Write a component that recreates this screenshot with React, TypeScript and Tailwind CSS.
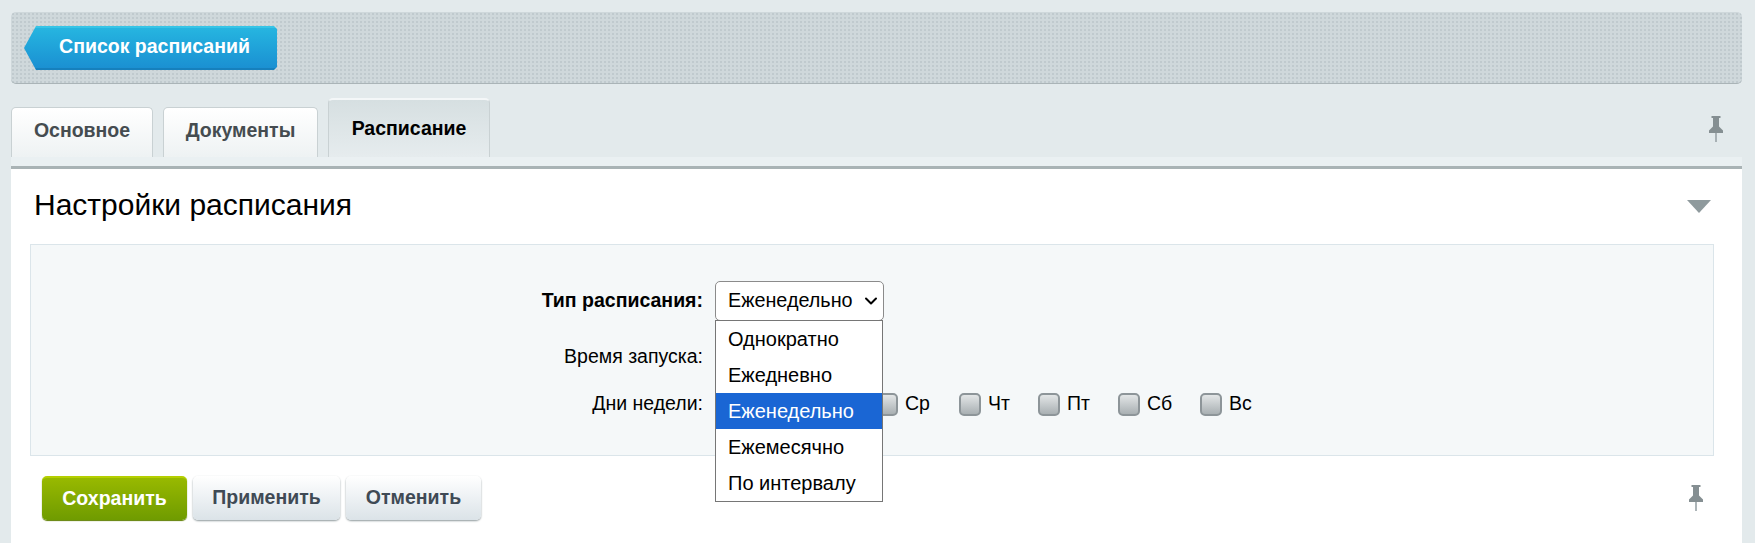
import { ChevronDown } from "lucide-react";

const font = "font-['Liberation_Sans',Arial,sans-serif]";

const options = ["Однократно", "Ежедневно", "Еженедельно", "Ежемесячно", "По интервалу"];

const days = [
  { name: "Ср", w: "w-[83px]" },
  { name: "Чт", w: "w-[79px]" },
  { name: "Пт", w: "w-[80px]" },
  { name: "Сб", w: "w-[82px]" },
  { name: "Вс", w: "w-[60px]" },
];

function Pin() {
  return (
    <svg width="14" height="26" viewBox="0 0 14 26" className="block">
      <path d="M2.5 0h9v2H10v8.5l4 4V17H0v-2.5l4-4V2H2.5z" fill="#858f92" />
      <rect x="6.2" y="17" width="1.6" height="9" fill="#9aa4a7" />
    </svg>
  );
}

function Tab({ label, className }: { label: string; className: string }) {
  return (
    <div
      className={`h-[50px] mr-[10px] pb-[4px] rounded-t-[5px] border border-b-0 border-[#c9d1d3] bg-gradient-to-b from-white to-[#eef2f3] flex items-center justify-center text-[19.5px] font-bold text-[#454c50] ${className}`}
    >
      {label}
    </div>
  );
}

function Day({ name, w }: { name: string; w: string }) {
  return (
    <div className={`flex items-center gap-[7px] ${w}`}>
      <div className="w-[22px] h-[23px] shrink-0 rounded-[5px] border-2 border-[#8d9599] bg-gradient-to-b from-[#e3e6e7] to-[#a9b0b3]" />
      <span className="text-[19.5px] text-black">{name}</span>
    </div>
  );
}

function ActionButton({ label, className }: { label: string; className: string }) {
  return (
    <button
      className={`h-[44px] pb-[1px] rounded-[5px] text-[19.5px] font-bold flex items-center justify-center ${className}`}
    >
      {label}
    </button>
  );
}

export default function App() {
  return (
    <div className={`${font} h-[543px] overflow-hidden bg-[#e3eaec] pt-[12px] pl-[11px] pr-[13px]`}>
      <div className="h-[72px] rounded-[5px] border-b border-[#aab4b7] bg-[#cfd8db] bg-[radial-gradient(#c0cace_1px,transparent_1px)] bg-[length:4px_4px] pt-[14px] pl-[13px]">
        <div className="w-[253px] h-[44px] pl-[8px] pb-[3px] flex items-center justify-center border-t-2 border-b-2 border-t-[#36c4e6] border-b-[#1680bd] bg-gradient-to-b from-[#26b5e0] to-[#1b90d2] text-[19.5px] font-bold text-white [clip-path:polygon(12px_0,calc(100%-3px)_0,100%_3px,100%_calc(100%-3px),calc(100%-3px)_100%,12px_100%,0_50%)]">
          Список расписаний
        </div>
      </div>

      <div className="h-[73px] flex items-end">
        <Tab label="Основное" className="w-[142px]" />
        <Tab label="Документы" className="w-[155px]" />
        <div className="w-[162px] h-[59px] rounded-t-[5px] border border-b-0 border-t-2 border-[#c9d1d3] border-t-[#f4f7f8] bg-gradient-to-b from-[#d6dfe1] to-[#e6ecee] flex items-center justify-center text-[19.5px] font-bold text-black">
          Расписание
        </div>
        <div className="ml-auto mb-[15px] mr-[19px]">
          <Pin />
        </div>
      </div>

      <div className="h-[12px] bg-[#eaf0f2] border-b-[3px] border-[#a9b3b5]" />

      <div className="h-[374px] bg-white pl-[19px] pr-[28px]">
        <div className="h-[75px] flex items-center justify-between pl-[4px] pr-[3px]">
          <h1 className="text-[30px] font-normal text-black mb-[5px]">Настройки расписания</h1>
          <div className="w-0 h-0 mb-[1px] border-l-[12px] border-r-[12px] border-t-[13px] border-l-transparent border-r-transparent border-t-[#8f9a9d]" />
        </div>

        <div className="h-[212px] border border-[#dbe5ea] bg-[#f5f8f9] pt-[36px] text-[19.5px] text-black">
          <div className="h-[40px] flex items-center">
            <div className="w-[672px] text-right font-bold">Тип расписания:</div>
            <div className="relative ml-[12px]">
              <div className="w-[169px] h-[40px] rounded-[5px] border border-[#8b8b8b] bg-white pl-[12px] pr-[2px] flex items-center justify-between text-[19.8px]">
                <span>Еженедельно</span>
                <ChevronDown size={20} strokeWidth={2.4} />
              </div>
              <ul className="absolute z-10 left-0 top-[39px] w-[168px] border border-[#767676] bg-white text-[20px]">
                {options.map((o) => (
                  <li
                    key={o}
                    className={`h-[36px] pl-[12px] flex items-center ${o === "Еженедельно" ? "bg-[#1a66d4] text-white" : ""}`}
                  >
                    {o}
                  </li>
                ))}
              </ul>
            </div>
          </div>
          <div className="h-[71px] flex items-center">
            <div className="w-[672px] text-right">Время запуска:</div>
          </div>
          <div className="h-[24px] flex items-center">
            <div className="w-[672px] text-right">Дни недели:</div>
            <div className="ml-[173px] flex items-center">
              {days.map((d) => (
                <Day key={d.name} name={d.name} w={d.w} />
              ))}
            </div>
          </div>
        </div>

        <div className="mt-[20px] pl-[12px] pr-[11px] flex items-center">
          <ActionButton
            label="Сохранить"
            className="w-[145px] border-t-2 border-[#b4cf00] bg-gradient-to-b from-[#98b900] to-[#6f9b00] text-white shadow-[0_1px_1px_#5f7f00]"
          />
          <ActionButton
            label="Применить"
            className="ml-[6px] w-[147px] bg-gradient-to-b from-white to-[#dbe3e8] text-[#3f4a55] shadow-[0_1px_2px_#8f9a9d]"
          />
          <ActionButton
            label="Отменить"
            className="ml-[6px] w-[135px] bg-gradient-to-b from-white to-[#dbe3e8] text-[#3f4a55] shadow-[0_1px_2px_#8f9a9d]"
          />
          <div className="ml-auto">
            <Pin />
          </div>
        </div>
      </div>
    </div>
  );
}
